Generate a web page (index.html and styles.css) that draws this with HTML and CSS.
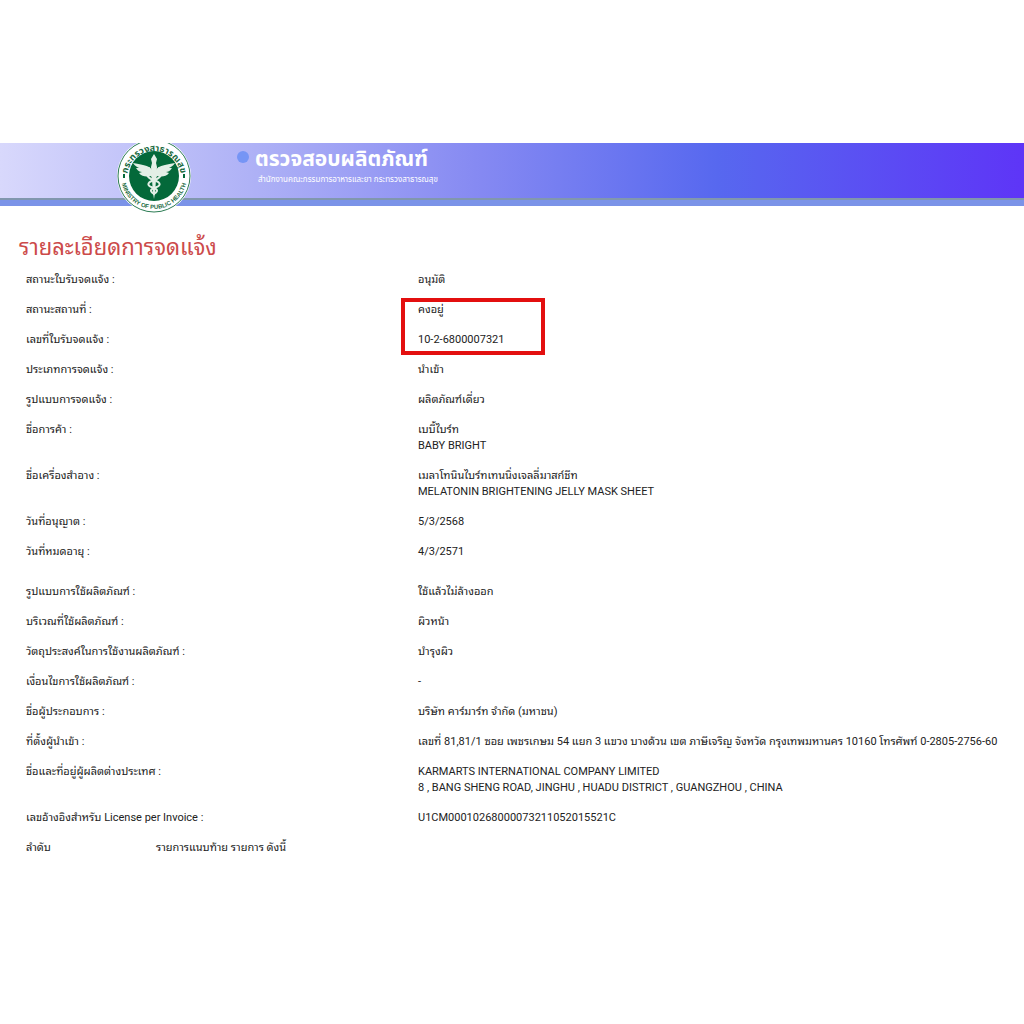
FILE: index.html
```html
<!DOCTYPE html>
<html lang="th">
<head>
    <meta charset="UTF-8">
    <meta name="viewport" content="width=device-width, initial-scale=1.0">
    <title>ตรวจสอบผลิตภัณฑ์</title>
    <link rel="stylesheet" href="styles.css">
</head>
<body>
    <header class="banner">
        <svg class="seal" viewBox="0 0 76 76" role="img" aria-label="กระทรวงสาธารณสุข">
            <defs>
                <path id="arc-top" d="M11 40 A27 27 0 1 1 65 40"/>
                <path id="arc-bottom" d="M5 38 A33 33 0 0 0 71 38"/>
            </defs>
            <circle cx="38" cy="38" r="37" fill="#fff"/>
            <circle cx="38" cy="38" r="36" fill="none" stroke="#2d7d55" stroke-width="1"/>
            <circle cx="38" cy="38" r="25" fill="#04693a"/>
            <text class="seal-thai"><textPath href="#arc-top" startOffset="50%" text-anchor="middle">กระทรวงสาธารณสุข</textPath></text>
            <text class="seal-eng"><textPath href="#arc-bottom" startOffset="50%" text-anchor="middle">MINISTRY OF PUBLIC HEALTH</textPath></text>
            <path d="M8 36 v4 M68 36 v4" stroke="#04693a" stroke-width="2"/>
            <!-- wings -->
            <g fill="#e3efe6">
                <path d="M37 34 C35 28 29 27 17 25 C19 28 21 29 23 30 L20 30 C22 33 24 34 26 34 L23 35 C26 39 31 39 35 38 L37 42 Z"/>
                <path d="M39 34 C41 28 47 27 59 25 C57 28 55 29 53 30 L56 30 C54 33 52 34 50 34 L53 35 C50 39 45 39 41 38 L39 42 Z"/>
                <path d="M38 16 L41 21 L40 25 L41 29 L39 55 L38 61 L37 55 L35 29 L36 25 L35 21 Z"/>
            </g>
            <!-- snakes -->
            <g fill="none" stroke="#e3efe6" stroke-width="2" stroke-linecap="round">
                <path d="M33 30 C29 36 31 40 38 42 C46 45 45 48 38 50 C33 52 35 54 38 56"/>
                <path d="M43 30 C47 36 45 40 38 42 C30 45 31 48 38 50 C43 52 41 54 38 56"/>
            </g>
        </svg>
        <span class="dot"></span>
        <div class="banner-text">
            <h1>ตรวจสอบผลิตภัณฑ์</h1>
            <p>สำนักงานคณะกรรมการอาหารและยา กระทรวงสาธารณสุข</p>
        </div>
    </header>
    <main>
        <h2>รายละเอียดการจดแจ้ง</h2>
        <table class="detail">
            <tbody>
                <tr><th scope="row">สถานะใบรับจดแจ้ง :</th><td>อนุมัติ</td></tr>
                <tr><th scope="row">สถานะสถานที่ :</th><td class="marked">คงอยู่</td></tr>
                <tr><th scope="row">เลขที่ใบรับจดแจ้ง :</th><td>10-2-6800007321</td></tr>
                <tr><th scope="row">ประเภทการจดแจ้ง :</th><td>นำเข้า</td></tr>
                <tr><th scope="row">รูปแบบการจดแจ้ง :</th><td>ผลิตภัณฑ์เดี่ยว</td></tr>
                <tr><th scope="row">ชื่อการค้า :</th><td>เบบี้ไบร์ท<br>BABY BRIGHT</td></tr>
                <tr><th scope="row">ชื่อเครื่องสำอาง :</th><td>เมลาโทนินไบร์ทเทนนิ่งเจลลี่มาสก์ชีท<br>MELATONIN BRIGHTENING JELLY MASK SHEET</td></tr>
                <tr><th scope="row">วันที่อนุญาต :</th><td>5/3/2568</td></tr>
                <tr><th scope="row">วันที่หมดอายุ :</th><td>4/3/2571</td></tr>
            </tbody>
        </table>
        <table class="detail">
            <tbody>
                <tr><th scope="row">รูปแบบการใช้ผลิตภัณฑ์ :</th><td>ใช้แล้วไม่ล้างออก</td></tr>
                <tr><th scope="row">บริเวณที่ใช้ผลิตภัณฑ์ :</th><td>ผิวหน้า</td></tr>
                <tr><th scope="row">วัตถุประสงค์ในการใช้งานผลิตภัณฑ์ :</th><td>บำรุงผิว</td></tr>
                <tr><th scope="row">เงื่อนไขการใช้ผลิตภัณฑ์ :</th><td>-</td></tr>
                <tr><th scope="row">ชื่อผู้ประกอบการ :</th><td>บริษัท คาร์มาร์ท จำกัด (มหาชน)</td></tr>
                <tr><th scope="row">ที่ตั้งผู้นำเข้า :</th><td>เลขที่ 81,81/1 ซอย เพชรเกษม 54 แยก 3 แขวง บางด้วน เขต ภาษีเจริญ จังหวัด กรุงเทพมหานคร 10160 โทรศัพท์ 0-2805-2756-60</td></tr>
                <tr><th scope="row">ชื่อและที่อยู่ผู้ผลิตต่างประเทศ :</th><td>KARMARTS INTERNATIONAL COMPANY LIMITED<br>8 , BANG SHENG ROAD, JINGHU , HUADU DISTRICT , GUANGZHOU , CHINA</td></tr>
                <tr><th scope="row">เลขอ้างอิงสำหรับ License per Invoice :</th><td>U1CM00010268000073211052015521C</td></tr>
            </tbody>
        </table>
        <table class="detail items">
            <thead>
                <tr><th scope="col">ลำดับ</th><th scope="col">รายการแนบท้าย รายการ ดังนี้</th></tr>
            </thead>
        </table>
    </main>
</body>
</html>
```
FILE: styles.css
```css
body {
    margin: 0;
    padding-top: 143px;
    background-color: #fff;
    color: #222;
    font-family: Roboto, "Noto Sans Thai Looped", "Noto Sans Thai", sans-serif;
    font-size: 11px;
    line-height: 16px;
}
.banner {
    display: flex;
    height: 57px;
    padding-left: 116px;
    border-bottom: 6px solid #7b93e8;
    box-shadow: inset 0 -2px #8197ae;
    background: linear-gradient(to right, #d8d8fc 0%, #aeb1f6 25%, #8589f2 47%, #5768ef 70%, #5e35f7 100%);
    color: #fff;
    font-family: "Noto Sans", "Noto Sans Thai", sans-serif;
}
.seal {
    flex: none;
    width: 76px;
    height: 76px;
    margin-top: -5px;
    clip-path: inset(5px 0 0 0);
}
.seal-thai, .seal-eng {
    fill: #1b6b42;
    font-weight: bold;
}
.seal-thai {
    font-size: 9px;
}
.seal-eng {
    font-family: "Liberation Sans", sans-serif;
    font-size: 6px;
}
.dot {
    flex: none;
    width: 12px;
    height: 12px;
    margin: 8px 6px 0 45px;
    border-radius: 50%;
    background-color: #7695f5;
}
.banner-text h1 {
    margin: 0;
    font-size: 21px;
    font-weight: bold;
    line-height: 30px;
}
.banner-text p {
    margin: 0 3px;
    font-size: 8px;
    line-height: 12px;
}
main {
    padding: 25px 19px;
}
h2 {
    margin: 0;
    color: #cc4a4a;
    font-size: 22px;
    font-weight: normal;
    line-height: 34px;
}
.detail {
    width: 100%;
    border-collapse: collapse;
    table-layout: fixed;
    margin-bottom: 10px;
}
.detail th, .detail td {
    padding: 7px;
    text-align: left;
    vertical-align: top;
    font-weight: normal;
    white-space: nowrap;
}
.detail th:first-child {
    width: 378px;
}
.detail.items {
    margin-top: -10px;
}
.detail.items th:first-child {
    width: 116px;
}
.marked {
    position: relative;
}
/* red frame around the status and the number */
.marked::after {
    content: "";
    position: absolute;
    top: 3px;
    left: -10px;
    width: 136px;
    height: 49px;
    border: 4px solid #e30f0f;
}
```
